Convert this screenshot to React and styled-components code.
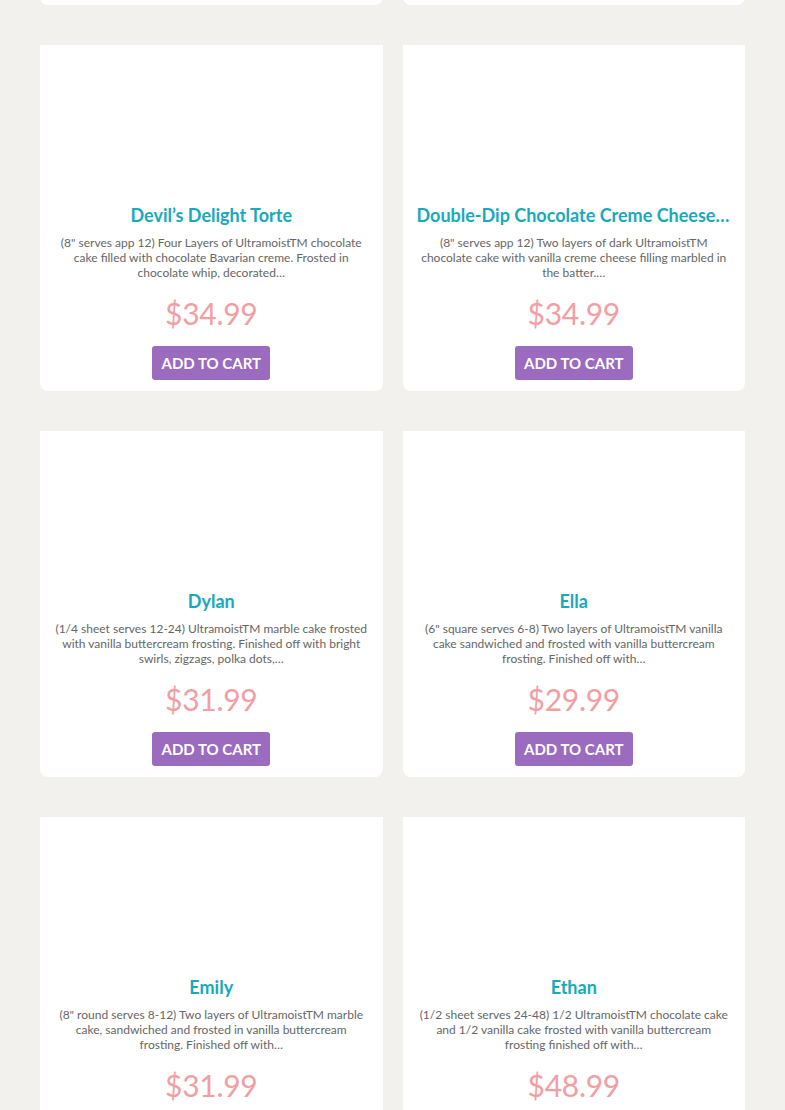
import React from 'react';
import styled, { createGlobalStyle } from 'styled-components';

const GlobalStyle = createGlobalStyle`
  body {
    margin: 0;
    background: #f2f1ed;
    font-family: Lato, "Open Sans", sans-serif;
  }
`;

const Grid = styled.div`
  display: grid;
  grid-template-columns: 1fr 1fr;
  column-gap: 20px;
  row-gap: 40px;
  padding: 0 40px 40px;
  margin-top: -341px;
`;

const Card = styled.div`
  display: flex;
  flex-direction: column;
  align-items: center;
  height: 346px;
  box-sizing: border-box;
  background: #fff;
  border-radius: 0 0 8px 8px;
  padding: 0 14px 11px;
  overflow: hidden;
`;

const Thumb = styled.div`
  width: 100%;
  height: 150px;
  flex-shrink: 0;
`;

const Title = styled.h3`
  margin: 9px 0 0;
  width: 100%;
  font-size: 18px;
  line-height: 22px;
  font-weight: 700;
  color: #18a9bd;
  text-align: center;
  white-space: nowrap;
  overflow: hidden;
  text-overflow: ellipsis;
`;

const Desc = styled.p`
  margin: 9px 1px 0;
  height: 45px;
  font-size: 12px;
  line-height: 15px;
  color: #666;
  text-align: center;
`;

const Price = styled.div`
  margin-top: 15px;
  font-size: 30px;
  line-height: 36px;
  letter-spacing: -0.3px;
  color: #f29ea3;
`;

const CartButton = styled.button`
  margin-top: 15px;
  height: 34px;
  padding: 0 9px;
  border: none;
  border-radius: 3px;
  background: #9a6bbf;
  color: #fff;
  font-family: Lato, "Open Sans", sans-serif;
  font-size: 15px;
  font-weight: 700;
  text-transform: uppercase;
  cursor: pointer;
`;

const products = [
  {
    name: 'Chocolate Fudge Cake',
    desc: '(8" serves app 12) Two layers of UltramoistTM chocolate cake frosted in rich chocolate fudge icing…',
    price: '$31.99',
  },
  {
    name: 'Cookies & Creme',
    desc: '(8" serves app 12) Two layers of UltramoistTM chocolate cake with cookies and creme filling…',
    price: '$34.99',
  },
  {
    name: 'Devil’s Delight Torte',
    desc: '(8" serves app 12) Four Layers of UltramoistTM chocolate cake filled with chocolate Bavarian creme. Frosted in chocolate whip, decorated…',
    price: '$34.99',
  },
  {
    name: 'Double-Dip Chocolate Creme Cheese Cake',
    desc: '(8" serves app 12) Two layers of dark UltramoistTM chocolate cake with vanilla creme cheese filling marbled in the batter.…',
    price: '$34.99',
  },
  {
    name: 'Dylan',
    desc: '(1/4 sheet serves 12-24) UltramoistTM marble cake frosted with vanilla buttercream frosting. Finished off with bright swirls, zigzags, polka dots,…',
    price: '$31.99',
  },
  {
    name: 'Ella',
    desc: '(6" square serves 6-8) Two layers of UltramoistTM vanilla cake sandwiched and frosted with vanilla buttercream frosting. Finished off with…',
    price: '$29.99',
  },
  {
    name: 'Emily',
    desc: '(8" round serves 8-12) Two layers of UltramoistTM marble cake, sandwiched and frosted in vanilla buttercream frosting. Finished off with…',
    price: '$31.99',
  },
  {
    name: 'Ethan',
    desc: '(1/2 sheet serves 24-48) 1/2 UltramoistTM chocolate cake and 1/2 vanilla cake frosted with vanilla buttercream frosting finished off with…',
    price: '$48.99',
  },
];

function ProductCard({ product }) {
  return (
    <Card>
      <Thumb />
      <Title>{product.name}</Title>
      <Desc>{product.desc}</Desc>
      <Price>{product.price}</Price>
      <CartButton>Add to cart</CartButton>
    </Card>
  );
}

export default function App() {
  return (
    <>
      <GlobalStyle />
      <Grid>
        {products.map((p) => (
          <ProductCard key={p.name} product={p} />
        ))}
      </Grid>
    </>
  );
}
